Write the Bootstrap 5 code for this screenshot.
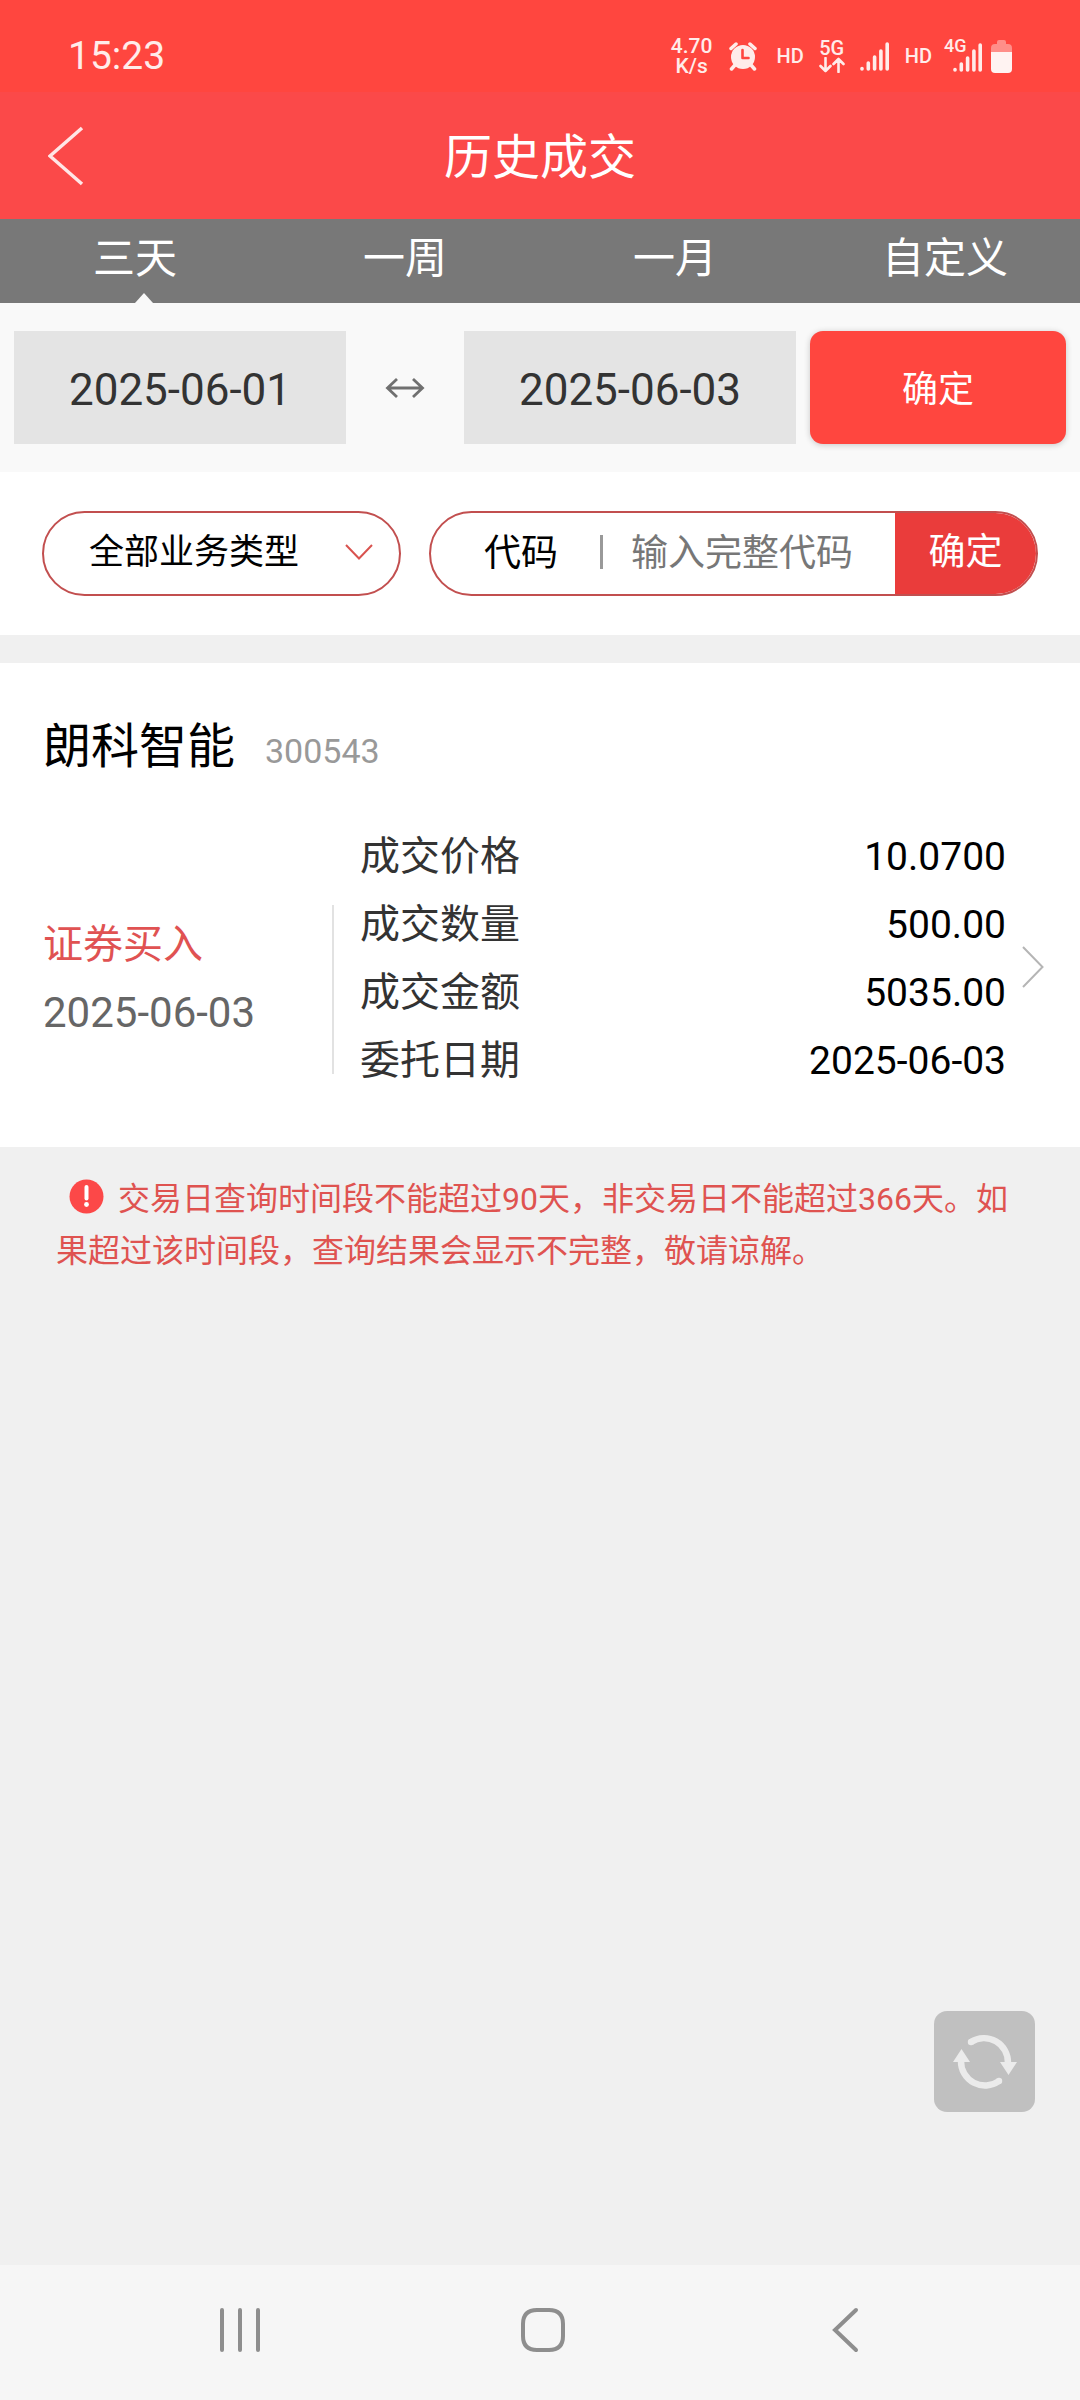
<!DOCTYPE html>
<html lang="zh-CN">
<head>
<meta charset="utf-8">
<meta name="viewport" content="width=device-width, initial-scale=1">
<title>历史成交</title>
<link href="https://cdn.jsdelivr.net/npm/bootstrap@5.3.0/dist/css/bootstrap.min.css" rel="stylesheet">
<style>
  body { font-family: Roboto, "Noto Sans CJK SC", sans-serif; background: #f0f0f0; color: #000; }
  svg { display: block; flex: none; fill: none; }
  button { font-family: inherit; }

  .status-bar { height: 92px; background: #ff463f; color: #ffecea; padding: 20px 68px 0 68px; }
  .status-time { font-size: 39px; line-height: 72px; }
  .status-icons { height: 72px; gap: 15px; font-weight: 500; }
  .net-speed { font-size: 21px; line-height: 20px; }
  .status-small { font-size: 20px; line-height: 20px; }
  .status-net { font-size: 20px; line-height: 18px; }
  .sim-two { position: relative; }
  .sim-two span { position: absolute; left: 0; top: 0; font-size: 18px; line-height: 14px; }

  .title-bar { height: 127px; background: #fb4949; color: #fff; padding: 0 48px; }
  .title-bar h1 { font-size: 48px; line-height: 72px; font-weight: 400; padding-top: 4px; }
  .title-side { width: 40px; }

  .range-tabs { height: 84px; background: #787878; }
  .range-tabs .nav-link { position: relative; height: 84px; padding: 0 0 4px; font-size: 42px; line-height: 80px; color: #fff; }
  .range-tabs .nav-link.active::after { content: ""; position: absolute; left: 50%; bottom: 0; border: 9px solid transparent; border-top: 0; border-bottom: 10px solid #f9f9f9; }

  .date-bar { background: #f9f9f9; padding: 28px 14px; }
  .date-field { height: 113px; border: 0; border-radius: 0; background: #e4e4e4; color: #333; font-size: 44px; text-align: center; min-width: 0; flex: 1 1 0; padding: 4px 0 0; }
  .date-arrow { width: 118px; }
  .date-submit { width: 256px; margin-left: 14px; padding: 8px 0 4px; border: 0; border-radius: 13px; background: #ff463f; color: #fff; font-size: 36px; box-shadow: 0 1px 6px rgba(0,0,0,.2); }
  .date-submit:hover { background: #f03c36; color: #fff; }

  .filter-bar { background: #fff; padding: 39px 42px; gap: 28px; }
  .pill-box { height: 85px; border: 2px solid #c24f4f; border-radius: 43px; background: #fff; overflow: hidden; }
  .type-pill { position: relative; flex: 0 0 359px; }
  .type-pill select { appearance: none; width: 100%; height: 100%; border: 0; background: transparent; color: #000; font-size: 35px; padding: 0 80px 0 45px; }
  .type-pill svg { position: absolute; right: 26px; top: 31px; pointer-events: none; }
  .code-pill { flex: 1 1 0; min-width: 0; }
  .code-pill label { font-size: 37px; padding: 0 42px 0 53px; }
  .code-rule { width: 3px; height: 34px; margin-bottom: 4px; background: #999; }
  .code-pill input { flex: 1 1 0; border: 0; background: transparent; min-width: 0; font-size: 37px; padding: 0 0 0 28px; }
  .code-pill input::placeholder { color: #777; opacity: 1; }
  .code-submit { width: 141px; border: 0; border-radius: 0; background: #ea3c3b; color: #fff; font-size: 37px; padding: 0 0 2px; }
  .code-submit:hover { background: #d83231; color: #fff; }

  .deal { background: #fff; margin-top: 28px; padding: 48px 36px 52px 43px; color: inherit; }
  .deal h2 { font-size: 48px; line-height: 72px; font-weight: 400; }
  .deal-code { margin-left: 30px; font-size: 34px; color: #999; }
  .deal-side { width: 289px; padding-top: 88px; line-height: 68px; }
  .deal-kind { font-size: 40px; color: #e05252; }
  .deal-day { font-size: 42px; color: #666; }
  .deal-rule { width: 2px; margin: 82px 26px 21px 0; background: #e2e2e2; }
  .deal-list { font-size: 40px; line-height: 68px; }
  .deal-list dt { font-weight: 400; color: #333; }
  .deal-list dd { font-size: 39px; }

  .notice { padding: 26px 56px; font-size: 32px; line-height: 52px; color: #df5350; }
  .notice svg { display: inline-block; margin: 0 14px 0 13px; vertical-align: -4px; }

  .refresh-btn { position: fixed; right: 45px; bottom: 288px; width: 101px; height: 101px; border: 0; border-radius: 13px; background: #c0c0c0; }
  .system-nav { height: 135px; background: #f6f6f6; padding-bottom: 6px; }
  .system-keys { padding-left: 5px; }
  .system-nav button { border: 0; background: transparent; width: 200px; }
</style>
</head>
<body class="d-flex flex-column min-vh-100">

<div class="status-bar d-flex justify-content-between align-items-start">
  <div class="status-time">15:23</div>
  <div class="status-icons d-flex align-items-center">
    <div class="net-speed text-center">4.70<br>K/s</div>
    <svg width="30" height="30" viewBox="0 0 28 30">
      <circle cx="14" cy="16" r="12" fill="#ffecea"/>
      <path d="M2 7.500l5-4.500M26 7.500l-5-4.500M6 24l-3.500 4M22 24l3.500 4" stroke="#ffecea" stroke-width="3.500" stroke-linecap="round"/>
      <path d="M13.500 9v8h6" stroke="#ff463f" stroke-width="2.600" stroke-linecap="round" stroke-linejoin="round"/>
    </svg>
    <div class="status-small ps-1">HD</div>
    <div class="status-net text-center">5G
      <svg width="26" height="16" viewBox="0 0 26 16">
        <path d="M6.500 1v13M1.500 9l5 5 5-5M19.500 15V2M14.500 7l5-5 5 5" stroke="#ffecea" stroke-width="2.600" stroke-linecap="round" stroke-linejoin="round"/>
      </svg>
    </div>
    <svg width="30" height="30" viewBox="0 0 30 30">
      <path d="M2 27.500v.5M8.300 22v6M14.600 16v12M20.900 10v18M27.200 3v25" stroke="#ffecea" stroke-width="3.600" stroke-linecap="round"/>
    </svg>
    <div class="d-flex align-items-center gap-2">
      <div class="status-small pe-1">HD</div>
      <div class="sim-two">
        <span>4G</span>
        <svg width="39" height="34" viewBox="0 0 39 34">
          <path d="M11 30.500v.5M17.300 25v6M23.600 19v12M29.900 12v19M36.200 6v25" stroke="#ffecea" stroke-width="3.600" stroke-linecap="round"/>
        </svg>
      </div>
      <svg width="21" height="33" viewBox="0 0 21 33">
        <path d="M6 4V2q0-2 2-2h5q2 0 2 2v2h2q4 0 4 4v5H0V8q0-4 4-4z" fill="#ff8e89"/>
        <path d="M0 12h21v17q0 4-4 4H4q-4 0-4-4z" fill="#fff3f2"/>
      </svg>
    </div>
  </div>
</div>

<header class="title-bar d-flex align-items-center justify-content-between">
  <a href="#" class="title-side" aria-label="返回">
    <svg width="36" height="60" viewBox="0 0 36 60"><path d="M34 2L2 30l32 28" stroke="#ffe6e6" stroke-width="3.500"/></svg>
  </a>
  <h1 class="m-0">历史成交</h1>
  <div class="title-side"></div>
</header>

<nav class="range-tabs nav nav-fill flex-nowrap">
  <a class="nav-link active col-3" aria-current="page" href="#">三天</a>
  <a class="nav-link col-3" href="#">一周</a>
  <a class="nav-link col-3" href="#">一月</a>
  <a class="nav-link col-3" href="#">自定义</a>
</nav>

<main>
  <form class="date-bar d-flex align-items-stretch">
    <input class="date-field" type="text" value="2025-06-01" aria-label="开始日期">
    <div class="date-arrow d-flex align-items-center justify-content-center">
      <svg width="40" height="22" viewBox="0 0 40 22"><path d="M2 11h36M12 2l-9.500 9 9.500 9M28 2l9.500 9-9.500 9" stroke="#707070" stroke-width="2.800"/></svg>
    </div>
    <input class="date-field" type="text" value="2025-06-03" aria-label="结束日期">
    <button class="date-submit btn" type="button">确定</button>
  </form>

  <form class="filter-bar d-flex">
    <div class="pill-box type-pill">
      <select aria-label="业务类型"><option>全部业务类型</option></select>
      <svg width="28" height="17" viewBox="0 0 28 17"><path d="M1 1l13 13.500L27 1" stroke="#d9534f" stroke-width="2"/></svg>
    </div>
    <div class="pill-box code-pill d-flex align-items-center">
      <label for="code" class="text-nowrap">代码</label>
      <div class="code-rule flex-shrink-0"></div>
      <input id="code" class="h-100" type="text" placeholder="输入完整代码">
      <button class="code-submit btn h-100 flex-shrink-0" type="button">确定</button>
    </div>
  </form>

  <a href="#" class="deal d-block text-decoration-none">
    <div class="d-flex align-items-baseline pb-2">
      <h2 class="m-0">朗科智能</h2>
      <span class="deal-code">300543</span>
    </div>
    <div class="d-flex pt-4 mt-2">
      <div class="deal-side flex-shrink-0">
        <div class="deal-kind">证券买入</div>
        <div class="deal-day">2025-06-03</div>
      </div>
      <div class="deal-rule flex-shrink-0"></div>
      <dl class="deal-list flex-grow-1 m-0">
        <div class="d-flex justify-content-between"><dt>成交价格</dt><dd class="m-0">10.0700</dd></div>
        <div class="d-flex justify-content-between"><dt>成交数量</dt><dd class="m-0">500.00</dd></div>
        <div class="d-flex justify-content-between"><dt>成交金额</dt><dd class="m-0">5035.00</dd></div>
        <div class="d-flex justify-content-between"><dt>委托日期</dt><dd class="m-0">2025-06-03</dd></div>
      </dl>
      <svg class="align-self-center ms-3 mt-3" width="22" height="42" viewBox="0 0 22 42"><path d="M1 1l19.500 20L1 41" stroke="#b5b5b5" stroke-width="2"/></svg>
    </div>
  </a>

  <p class="notice m-0"><svg width="35" height="35" viewBox="0 0 35 35"><circle cx="17.500" cy="17.500" r="17" fill="#fc4848"/><path d="M17.500 8v11.500" stroke="#fff" stroke-width="4" stroke-linecap="round"/><circle cx="17.500" cy="25.500" r="2.400" fill="#fff"/></svg>交易日查询时间段不能超过90天，非交易日不能超过366天。如果超过该时间段，查询结果会显示不完整，敬请谅解。</p>
</main>

<button class="refresh-btn d-flex align-items-center justify-content-center p-0" type="button" aria-label="刷新">
  <svg width="64" height="56" viewBox="0 0 64 56">
    <path d="M18 8A24 24 0 0 1 55 29M46 47A24 24 0 0 1 8 27" stroke="#ebebeb" stroke-width="6.400" stroke-linecap="butt"/>
    <circle cx="18" cy="8" r="3.200" fill="#ebebeb"/><circle cx="46" cy="47" r="3.200" fill="#ebebeb"/>
    <path d="M47 28h17l-8.500 13zM0 28h17L8.500 15z" fill="#ebebeb"/>
  </svg>
</button>

<footer class="system-nav d-flex align-items-center justify-content-center mt-auto">
  <div class="system-keys d-flex justify-content-between w-75">
    <button type="button" class="d-flex justify-content-center" aria-label="最近任务">
      <svg width="42" height="46" viewBox="0 0 42 46"><path d="M3 3v40M21 3v40M39 3v40" stroke="#8e8e8e" stroke-width="4" stroke-linecap="round"/></svg>
    </button>
    <button type="button" class="d-flex justify-content-center" aria-label="主屏幕">
      <svg width="46" height="46" viewBox="0 0 46 46"><path d="M17 3h12Q43 3 43 17v12Q43 43 29 43H17Q3 43 3 29V17Q3 3 17 3z" stroke="#8e8e8e" stroke-width="4"/></svg>
    </button>
    <button type="button" class="d-flex justify-content-center" aria-label="后退">
      <svg width="28" height="46" viewBox="0 0 28 46"><path d="M25 3L4 23l21 20" stroke="#8e8e8e" stroke-width="4" stroke-linecap="round"/></svg>
    </button>
  </div>
</footer>

<script src="https://cdn.jsdelivr.net/npm/bootstrap@5.3.0/dist/js/bootstrap.bundle.min.js"></script>
</body>
</html>
